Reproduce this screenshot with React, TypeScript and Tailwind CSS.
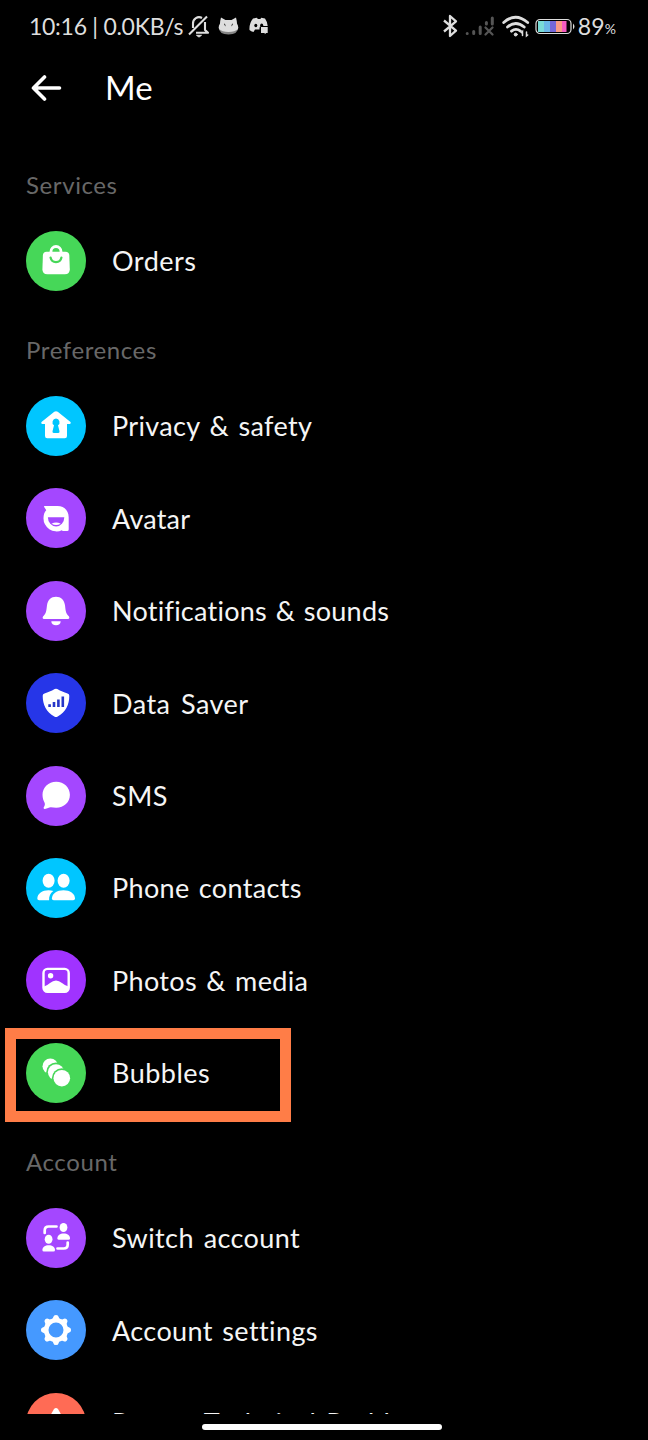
import type { ReactNode } from "react";

type Item = {
  label: string;
  color: string;
  spacing: string;
  icon: ReactNode;
  highlighted?: boolean;
};

type Section = { title: string; items: Item[] };

const sections: Section[] = [
  {
    title: "Services",
    items: [
      {
        label: "Orders",
        color: "bg-[#46d758]",
        spacing: "tracking-[0.5px]",
        icon: (
          <>
            <path d="M25 22v-1.5a5 5 0 0 1 10 0V22" fill="none" stroke="white" strokeWidth="2.8" />
            <path d="M20.500 20.700h19q3.600 0 3.800 3.500l.5 14q0 5-5 5H21.400q-5 0-5-5l.5-14q.2-3.500 3.600-3.500z" />
            <path d="M24.600 26.600a5.500 5.500 0 0 0 10.800 0" fill="none" stroke="#46d758" strokeWidth="2.300" strokeLinecap="round" />
          </>
        ),
      },
    ],
  },
  {
    title: "Preferences",
    items: [
      {
        label: "Privacy & safety",
        color: "bg-[#00c6ff]",
        spacing: "tracking-[0.35px] [word-spacing:2.2px]",
        icon: (
          <>
            <path d="M28.300 15.800q1.700-1.300 3.400 0L44.500 26q1.100 1.700-.8 2H41v12q0 2.300-2.300 2.300H21.300Q19 42.300 19 40V28h-2.700q-1.900-.3-.8-2z" />
            <path d="M30 22.600a3.700 3.700 0 0 1 2 6.700l1.500 6q.3 1.700-1.200 1.700h-4.600q-1.500 0-1.200-1.700l1.500-6a3.700 3.700 0 0 1 2-6.700z" fill="#00c6ff" />
          </>
        ),
      },
      {
        label: "Avatar",
        color: "bg-[#a447ff]",
        spacing: "tracking-[0.2px]",
        icon: (
          <>
            <path d="M18.500 18h13c7 0 11.200 5 11.200 11.500V41.500q0 1.500-1.500 1.500h-4.500l-.8-.8A13 13 0 0 1 17.500 30c0-3.500 1-5.800 2.700-7.800-.7-1.500-1.600-2.500-2.200-3.500q0-.7.5-.7z" />
            <path d="M21.900 29.300h16.400a8.200 9.300 0 0 1-16.400 0z" fill="#a447ff" />
            <path d="M25.500 35.800q4.600-2.400 9.200 0-4.600 2.600-9.200 0z" />
          </>
        ),
      },
      {
        label: "Notifications & sounds",
        color: "bg-[#a447ff]",
        spacing: "tracking-[0.25px] [word-spacing:1.500px]",
        icon: (
          <>
            <path d="M30 15.700c5 0 8.300 3.400 9 8.500.6 5 .8 8.100 3.300 10.500 1.700 1.600 1.200 3.400-.8 3.400h-23c-2 0-2.500-1.800-.8-3.400 2.500-2.400 2.700-5.500 3.300-10.500.7-5.100 4-8.500 9-8.500z" />
            <path d="M25.300 40.200h9.400c0 2.500-2 4.100-4.700 4.100s-4.700-1.600-4.700-4.100z" />
          </>
        ),
      },
      {
        label: "Data Saver",
        color: "bg-[#2636e8]",
        spacing: "tracking-[0.5px] [word-spacing:3px]",
        icon: (
          <>
            <path d="M28.700 16q1.300-.6 2.600 0c3.600 2 6.500 3.500 10.200 4.400q1.800.4 1.800 2.300C43.300 32 39.500 39 31.700 43.600q-1.700 1-3.400 0C20.500 39 16.700 32 16.700 22.700q0-1.900 1.800-2.300c3.700-.9 6.600-2.400 10.200-4.400z" />
            <path d="M23.600 34v-2.700M28 34v-5M32.400 34v-7.500M36.800 34v-10.500" fill="none" stroke="#2636c8" strokeWidth="2.600" />
          </>
        ),
      },
      {
        label: "SMS",
        color: "bg-[#a447ff]",
        spacing: "tracking-[0.5px]",
        icon: (
          <path d="M30.200 15.700c7.800 0 13.700 5.600 13.700 13.100s-5.900 13-13.700 13c-2 0-3.700-.4-5.300-.5-1.800-.1-3.500 1.300-6 1.600-1.200.1-1.600-.7-1.100-1.600.8-1.500 1.400-2.800.9-4.400-1.300-2.200-2.200-4.800-2.200-8.100 0-7.500 5.900-13.100 13.700-13.100z" />
        ),
      },
      {
        label: "Phone contacts",
        color: "bg-[#00c6ff]",
        spacing: "tracking-[0.35px] [word-spacing:2px]",
        icon: (
          <>
            <ellipse cx="22.600" cy="22.700" rx="6" ry="7" />
            <ellipse cx="37.600" cy="22.700" rx="6" ry="7" />
            <path d="M22.500 32.300q2.600 0 4.800.8c-3 2.200-4.500 5.200-4.200 9.200h-10q-1.800 0-1.800-1.800c.3-5 5-8.200 11.200-8.200z" />
            <path d="M37.500 32.300c6.500 0 11.300 3.200 11.500 8.200q0 1.800-1.800 1.800H27.700q-1.800 0-1.800-1.800c.2-5 5-8.200 11.600-8.200z" />
          </>
        ),
      },
      {
        label: "Photos & media",
        color: "bg-[#a033ff]",
        spacing: "tracking-[0.35px] [word-spacing:2px]",
        icon: (
          <>
            <rect x="17.500" y="18.900" width="25.200" height="22.800" rx="4" fill="none" stroke="white" strokeWidth="2.400" />
            <circle cx="24.600" cy="25.700" r="2.700" />
            <path d="M18 36.500q3.500-1.300 6-3.500 6-5 12 0 2.500 2.200 6.500 3.500v2.500q0 2.500-2.500 2.500H20.500q-2.500 0-2.500-2.500z" />
          </>
        ),
      },
      {
        label: "Bubbles",
        color: "bg-[#46d758]",
        spacing: "tracking-[0.5px]",
        highlighted: true,
        icon: (
          <>
            <circle cx="24.300" cy="23.300" r="7.800" />
            <circle cx="30" cy="29.300" r="9.800" fill="#46d758" />
            <circle cx="30" cy="29.300" r="8.100" />
            <circle cx="35.800" cy="35.200" r="10" fill="#46d758" />
            <circle cx="35.800" cy="35.200" r="8.300" />
          </>
        ),
      },
    ],
  },
  {
    title: "Account",
    items: [
      {
        label: "Switch account",
        color: "bg-[#a447ff]",
        spacing: "tracking-[0.4px] [word-spacing:2.500px]",
        icon: (
          <>
            <path d="M18.700 25v-2.500q0-4 4-4h7.800M41.700 34.500v2q0 4-4 4H31.500" fill="none" stroke="white" strokeWidth="2.700" strokeLinecap="round" />
            <ellipse cx="37.500" cy="19.500" rx="3.900" ry="4.500" />
            <path d="M37.700 25.500c3.600 0 6.300 1.900 6.300 4.800q0 1.500-1.500 1.500h-9.600q-1.500 0-1.500-1.500c0-2.900 2.700-4.800 6.300-4.800z" />
            <ellipse cx="22.600" cy="31.200" rx="3.900" ry="4.500" />
            <path d="M22.700 37.300c3.600 0 6.300 1.900 6.300 4.600q0 1.500-1.500 1.500h-9.600q-1.500 0-1.500-1.500c0-2.700 2.700-4.600 6.300-4.600z" />
          </>
        ),
      },
      {
        label: "Account settings",
        color: "bg-[#4599ff]",
        spacing: "tracking-[0.4px] [word-spacing:2px]",
        icon: (
          <>
            <circle cx="30" cy="30" r="9.800" fill="none" stroke="white" strokeWidth="4.600" />
            {[0, 45, 90, 135, 180, 225, 270, 315].map((angle) => (
              <path key={angle} d="M25.500 19.500q1.600-.8 1.800-2.400.4-2.200 2.700-2.200t2.700 2.200q.2 1.600 1.800 2.400z" transform={`rotate(${angle} 30 30)`} />
            ))}
          </>
        ),
      },
      {
        label: "Report Technical Problem",
        color: "bg-[#ff6b55]",
        spacing: "tracking-[0.4px] [word-spacing:2.500px]",
        icon: <path d="M28 16q2-2.200 4 0l13 23q1 4-3 4H18q-4 0-3-4z" />,
      },
    ],
  },
];

function StatusBar() {
  return (
    <div className="flex h-[52px] shrink-0 items-center justify-between pr-[32px] pl-[29px] text-[23px] text-[#dedede]">
      <div className="flex items-center">
        <span className="w-[159px] whitespace-nowrap tracking-[-0.28px]">10:16 | 0.0KB/s</span>
        {/* muted */}
        <svg width="22" height="24" viewBox="0 0 22 24" fill="none" stroke="currentColor" strokeWidth="2.100">
          <path d="M5 14V9.500a6 6 0 0 1 9-5.500M17 8v8l3 2.800H8M1 20.500L19 2.500" strokeLinejoin="round" />
          <path d="M8.500 21.300h5l-2.500 1.800z" fill="currentColor" strokeWidth="1" />
        </svg>
        {/* cat */}
        <svg className="ml-[8px]" width="21" height="18" viewBox="0 0 21 18" fill="currentColor">
          <path d="M.5 10Q1 17.500 10.500 17.500T20.500 10z" fill="#858585" />
          <path d="M3 .500l4.500 2.500h6L18 .500q1 4 1 6 2 3 1 5.500-3 3-9.500 3T1 12Q0 9 2 6.500 2 4 3 .500z" />
          <path d="M6 6.300q1.700 1 1.700 3.200-1.700-.5-1.700-3.200zM15 6.300q-1.700 1-1.700 3.200 1.700-.5 1.700-3.200z" fill="#222" />
        </svg>
        {/* discord */}
        <svg className="ml-[10px]" width="20" height="18" viewBox="0 0 20 18" fill="currentColor">
          <path d="M4 1.500L8 .700l.8 1.300h2.600l.8-1.300 3.800.8q2.500 3.500 2.700 7.500h-6.200a2 2 0 0 0-2 2v1.500H6L4.500 15Q2 14.500.500 13 0 6.500 4 1.500z" />
          <path d="M12 10h6.700v6h-1.500l-1.500 1.300V16H12z" />
          <ellipse cx="6.800" cy="8.500" rx="1.500" ry="1.800" fill="black" />
          <ellipse cx="12.700" cy="8.200" rx="1.500" ry="1.700" fill="black" />
        </svg>
      </div>
      <div className="flex items-center">
        <svg width="17" height="24" viewBox="0 0 17 24" fill="none" stroke="currentColor" strokeWidth="2.300">
          <path d="M2 6.500l12 10.200-6 5.300V2l6 5.300L2 17.500" strokeLinejoin="round" />
        </svg>
        <svg className="ml-[6px]" width="29" height="20" viewBox="0 0 29 20" fill="none" stroke="#555" strokeWidth="3" strokeLinecap="round">
          <path d="M2.200 17.500v0M8.700 17.500v-2M15.200 17.500V11M21.400 8V6.500M27.300 8V2" />
          <path d="M20.500 11.500l7 7M27.500 11.500l-7 7" strokeWidth="2.200" />
        </svg>
        <svg className="ml-[8px]" width="28" height="23" viewBox="0 0 28 23" fill="none" stroke="currentColor" strokeWidth="2.800" strokeLinecap="round">
          <path d="M1.700 7.500q11.800-10.500 24 0M5.500 12q8.200-7 16.700 0M9.500 16.200q4.500-3.700 9 0" />
          <circle cx="13.700" cy="19.500" r="1.500" fill="currentColor" strokeWidth="1" />
          <path d="M20.500 20.500v-4l-1 1.200M24.500 17v4l1.200-1" strokeWidth="1.500" />
        </svg>
        <svg className="ml-[5px]" width="41" height="17" viewBox="0 0 41 17">
          <rect x="1" y="1.500" width="35" height="14" rx="4" fill="none" stroke="#dedede" strokeWidth="1.200" />
          <rect x="3" y="3" width="7" height="11" fill="#79dcd7" />
          <rect x="9" y="3" width="7" height="11" fill="#6bb8e8" />
          <rect x="15" y="3" width="7" height="11" fill="#7566d9" />
          <rect x="21" y="3" width="7" height="11" fill="#f99a86" />
          <rect x="27" y="3" width="4.500" height="11" fill="#f65cc1" />
          <path d="M38 5.500q3 3 0 6z" fill="#dedede" />
        </svg>
        <span className="ml-[2px] tracking-[0.2px]">89</span>
        <span className="mt-[4px] text-[14px]">%</span>
      </div>
    </div>
  );
}

function Row({ item }: { item: Item }) {
  return (
    <li className="relative flex h-[92.4px] items-center pl-[26px]">
      <span className={`size-[60px] shrink-0 rounded-full ${item.color}`}>
        <svg viewBox="0 0 60 60" className="size-full" fill="white">
          {item.icon}
        </svg>
      </span>
      <span className={`ml-[26px] text-[27px] leading-none whitespace-nowrap text-[#f5f5f5] ${item.spacing}`}>{item.label}</span>
      {item.highlighted && <span className="absolute top-[1px] left-[5px] h-[94px] w-[286px] border-[11px] border-[#ff7d47]" />}
    </li>
  );
}

export default function App() {
  return (
    <div className="flex h-[1440px] w-[648px] flex-col overflow-hidden bg-black font-['Lato',sans-serif] text-white">
      <StatusBar />

      <header className="flex h-[72px] shrink-0 items-center pl-[31px]">
        <svg width="31" height="26" viewBox="0 0 31 26" fill="none" stroke="white" strokeWidth="3.600" strokeLinecap="round" strokeLinejoin="round">
          <path d="M28.500 13H2.500M13.500 2L2.500 13l11 11" />
        </svg>
        <h1 className="ml-[43px] text-[33px]">Me</h1>
      </header>

      <main className="mt-[18px] h-[1271.500px] shrink-0 overflow-hidden">
        {sections.map((section) => (
          <section key={section.title}>
            <h2 className="flex h-[72.700px] items-center pt-[14px] pl-[26px] text-[24px] tracking-[0.6px] text-[#686868]">{section.title}</h2>
            <ul>
              {section.items.map((item) => (
                <Row key={item.label} item={item} />
              ))}
            </ul>
          </section>
        ))}
      </main>

      {/* gesture bar */}
      <div className="mt-[10px] ml-[202px] h-[6px] w-[240px] shrink-0 rounded-full bg-white" />
    </div>
  );
}
